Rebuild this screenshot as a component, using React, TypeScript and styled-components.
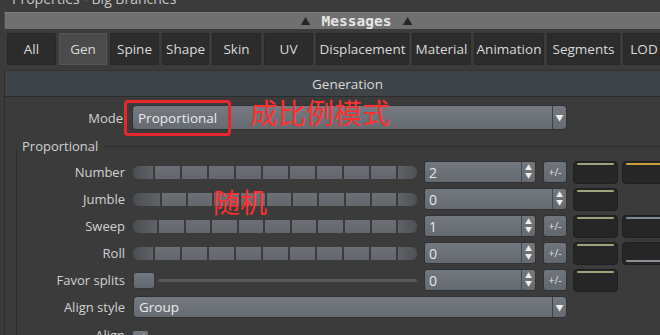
import React from "react";
import styled, { createGlobalStyle, css } from "styled-components";

const GlobalStyle = createGlobalStyle`
  html, body { margin: 0; padding: 0; background: #3b3b3b; }
  body { font-family: "Open Sans", "Noto Sans CJK SC", sans-serif; }
  * { box-sizing: border-box; }
`;

const Window = styled.div`
  position: relative;
  width: 660px;
  height: 335px;
  overflow: hidden;
  background: #3b3b3b;
`;

const TitleBar = styled.div`
  height: 10px;
  overflow: hidden;
  padding-left: 12px;
`;

const TitleText = styled.div`
  margin-top: -9px;
  font-size: 14px;
  line-height: 16px;
  color: #c6c6c6;
  white-space: nowrap;
`;

const MessagesBar = styled.div`
  margin: 2px 0 0 4px;
  height: 17px;
  background: #707070;
  border-left: 1px solid #4c4c4c;
  border-top: 1px solid #7c7c7c;
  display: flex;
  align-items: center;
  justify-content: center;
  gap: 11px;
  padding-left: 48px;
`;

const MsgArrow = styled.span`
  font-size: 10px;
  color: #262626;
  line-height: 1;
`;

const MsgText = styled.span`
  font-family: "DejaVu Sans Mono", monospace;
  font-weight: bold;
  font-size: 14.5px;
  color: #e6e6e6;
  line-height: 16px;
`;

const TabRow = styled.div`
  margin-top: 4px;
  height: 32px;
  display: flex;
  gap: 3px;
  padding-left: 7px;
`;

const Tab = styled.div<{ $w: number; $active?: boolean }>`
  width: ${(p) => p.$w}px;
  flex-shrink: 0;
  height: 32px;
  display: flex;
  align-items: center;
  justify-content: center;
  font-size: 13.5px;
  color: #dadada;
  border-radius: 1px;
  background: ${(p) => (p.$active ? "#4b4b4b" : "#2c2c2c")};
  border: 1px solid ${(p) => (p.$active ? "#555" : "#272727")};
  white-space: nowrap;
`;

const Body = styled.div`
  margin: 5px 0 0 4px;
  border-left: 1px solid #2b2b2b;
  height: 400px;
`;

const SectionHeader = styled.div`
  height: 27px;
  background: #3e4348;
  border-top: 1px solid #303336;
  border-bottom: 1px solid #2a2d30;
  display: flex;
  align-items: center;
  justify-content: center;
  padding-left: 30px;
  font-size: 13.5px;
  color: #d8d8d8;
`;

const ModeRow = styled.div`
  margin-top: 8px;
  height: 25px;
  display: flex;
  align-items: center;
`;

const Label = styled.div<{ $w: number }>`
  width: ${(p) => p.$w}px;
  flex-shrink: 0;
  text-align: right;
  font-size: 13px;
  color: #d2d2d2;
  white-space: nowrap;
`;

const Select = styled.div<{ $h: number }>`
  margin-left: ${(p) => (p.$h === 25 ? 9 : 8)}px;
  width: ${(p) => (p.$h === 25 ? 435 : 434)}px;
  height: ${(p) => p.$h}px;
  border-radius: 4px;
  border: 1px solid #2f3235;
  background: linear-gradient(#757a81, #666b71);
  display: flex;
  align-items: stretch;
  flex-shrink: 0;
`;

const SelectText = styled.div`
  flex: 1;
  display: flex;
  align-items: center;
  padding-left: 5px;
  font-size: 13.5px;
  color: #ececec;
`;

const SelectArrow = styled.div`
  width: 14px;
  border-left: 1px solid #3f4246;
  display: flex;
  align-items: center;
  justify-content: center;
  font-size: 8px;
  color: #f0f0f0;
`;

const Group = styled.fieldset`
  margin: 7px 0 0 11px;
  padding: 6px 0 0 0;
  border: 1px solid #2f2f2f;
  border-right: none;
  border-bottom: none;
  border-radius: 5px 0 0 0;
  min-width: 0;
  display: flex;
  flex-direction: column;
  gap: 5px;
`;

const Legend = styled.legend`
  padding: 0 5px;
  font-size: 13px;
  line-height: 18px;
  color: #d2d2d2;
`;

const Row = styled.div`
  height: 22px;
  display: flex;
  align-items: center;
  flex-shrink: 0;
`;

const Slider = styled.div`
  margin-left: 8px;
  width: 284px;
  height: 13px;
  display: flex;
  gap: 2px;
  flex-shrink: 0;
`;

const Segment = styled.div<{ $end?: "left" | "right"; $w?: number }>`
  height: 13px;
  ${(p) => (p.$w ? css`width: ${p.$w}px; flex-shrink: 0;` : css`flex: 1;`)}
  background: linear-gradient(#6c7076, #63676c);
  ${(p) =>
    p.$end === "left" &&
    css`
      border-radius: 6px 0 0 6px;
      background: linear-gradient(90deg, #4b4e51, #5f6368);
    `}
  ${(p) =>
    p.$end === "right" &&
    css`
      border-radius: 0 6px 6px 0;
      background: linear-gradient(90deg, #5f6368, #4d5053);
    `}
`;

const Knob = styled.div`
  margin-left: 8px;
  width: 22px;
  height: 17px;
  border-radius: 3px;
  background: linear-gradient(#727780, #646970);
  border: 1px solid #34373a;
  flex-shrink: 0;
`;

const Track = styled.div`
  margin-left: 3px;
  width: 259px;
  height: 3px;
  border-radius: 2px;
  background: #54585c;
  flex-shrink: 0;
`;

const Spin = styled.div<{ $w: number }>`
  margin-left: 7px;
  width: ${(p) => p.$w}px;
  height: 22px;
  border-radius: 3px;
  border: 1px solid #303336;
  background: linear-gradient(#73787e, #656a70);
  display: flex;
  flex-shrink: 0;
`;

const SpinValue = styled.div`
  flex: 1;
  display: flex;
  align-items: center;
  padding-left: 4px;
  font-size: 14px;
  color: #e6e6e6;
`;

const SpinArrows = styled.div`
  width: 14px;
  border-left: 1px solid #45494d;
  display: flex;
  flex-direction: column;
  align-items: center;
  justify-content: center;
  font-size: 7px;
  line-height: 8px;
  color: #eeeeee;
`;

const PlusMinus = styled.div`
  margin-left: 7px;
  width: 24px;
  height: 22px;
  border-radius: 3px;
  background: linear-gradient(#70757b, #63686e);
  border: 1px solid #303336;
  display: flex;
  align-items: center;
  justify-content: center;
  font-size: 10.5px;
  color: #e2e2e2;
  flex-shrink: 0;
`;

const Swatch = styled.div<{ $ml: number; $w: number; $line?: string; $bottom?: boolean; $empty?: boolean }>`
  position: relative;
  margin-left: ${(p) => p.$ml}px;
  width: ${(p) => p.$w}px;
  height: 23px;
  border-radius: 4px;
  flex-shrink: 0;
  background: ${(p) => (p.$empty ? "transparent" : "#262626")};
  border: 1px solid ${(p) => (p.$empty ? "transparent" : "#1f1f1f")};
  ${(p) =>
    p.$line &&
    css`
      &::before {
        content: "";
        position: absolute;
        left: 3px;
        right: 3px;
        ${p.$bottom ? "bottom: 2px;" : "top: 1px;"}
        height: 2px;
        border-radius: 1px;
        background: ${p.$line};
      }
    `}
`;

const Check = styled.div`
  margin-left: 8px;
  margin-top: 8px;
  width: 15px;
  height: 15px;
  border-radius: 2px;
  background: linear-gradient(#777c82, #686d73);
  display: flex;
  align-items: center;
  justify-content: center;
  flex-shrink: 0;
`;

const AlignRow = styled.div`
  height: 22px;
  display: flex;
  align-items: flex-start;
  flex-shrink: 0;
`;

const AlignLabel = styled(Label)`
  margin-top: 3px;
`;

const Highlight = styled.div`
  position: absolute;
  left: 124px;
  top: 100px;
  width: 107px;
  height: 36px;
  border: 3px solid #e8262b;
  border-radius: 4px;
`;

const Note = styled.div<{ $x: number; $y: number; $size: number }>`
  position: absolute;
  left: ${(p) => p.$x}px;
  top: ${(p) => p.$y}px;
  font-family: "Noto Sans CJK SC", sans-serif;
  font-weight: 400;
  font-size: ${(p) => p.$size}px;
  line-height: 1;
  color: #ff2f2f;
  white-space: nowrap;
`;

const tabs: [string, number][] = [
  ["All", 49],
  ["Gen", 48],
  ["Spine", 49],
  ["Shape", 47],
  ["Skin", 49],
  ["UV", 49],
  ["Displacement", 93],
  ["Material", 59],
  ["Animation", 70],
  ["Segments", 73],
  ["LOD", 42],
];

type Side = { line?: string; bottom?: boolean; empty?: boolean };

const SegSlider = ({ lead }: { lead: number }) => (
  <Slider>
    <Segment $end="left" $w={lead} />
    {Array.from({ length: 9 }).map((_, i) => (
      <Segment key={i} />
    ))}
    <Segment $end="right" $w={19} />
  </Slider>
);

const SpinBox = ({ value, w }: { value: string; w: number }) => (
  <Spin $w={w}>
    <SpinValue>{value}</SpinValue>
    <SpinArrows>
      <span>▲</span>
      <span>▼</span>
    </SpinArrows>
  </Spin>
);

const GREEN = "#9da57d";

const ParamRow = ({
  label,
  lead,
  value,
  pm = true,
  knob,
  side,
}: {
  label: string;
  lead?: number;
  value: string;
  pm?: boolean;
  knob?: boolean;
  side?: Side;
}) => (
  <Row>
    <Label $w={108}>{label}</Label>
    {knob ? (
      <>
        <Knob />
        <Track />
      </>
    ) : (
      <SegSlider lead={lead ?? 20} />
    )}
    <SpinBox value={value} w={pm ? 112 : 143} />
    {pm && <PlusMinus>+/-</PlusMinus>}
    <Swatch $ml={6} $w={45} $line={GREEN} />
    {side && <Swatch $ml={4} $w={50} $line={side.line} $bottom={side.bottom} $empty={side.empty} />}
  </Row>
);

export default function App() {
  return (
    <>
      <GlobalStyle />
      <Window>
        <TitleBar>
          <TitleText>Properties - Big Branches</TitleText>
        </TitleBar>
        <MessagesBar>
          <MsgArrow>▲</MsgArrow>
          <MsgText>Messages</MsgText>
          <MsgArrow>▲</MsgArrow>
        </MessagesBar>
        <TabRow>
          {tabs.map(([t, w]) => (
            <Tab key={t} $w={w} $active={t === "Gen"}>
              {t}
            </Tab>
          ))}
        </TabRow>
        <Body>
          <SectionHeader>Generation</SectionHeader>
          <ModeRow>
            <Label $w={118}>Mode</Label>
            <Select $h={25}>
              <SelectText>Proportional</SelectText>
              <SelectArrow>▼</SelectArrow>
            </Select>
          </ModeRow>
          <Group>
            <Legend>Proportional</Legend>
            <ParamRow label="Number" lead={20} value="2" side={{ line: "#c9a13a" }} />
            <ParamRow label="Jumble" lead={27} value="0" pm={false} />
            <ParamRow label="Sweep" lead={24} value="1" side={{ line: "#7d8a9c" }} />
            <ParamRow label="Roll" lead={20} value="0" side={{ line: "#8a8f95", bottom: true }} />
            <ParamRow label="Favor splits" knob value="0" />
            <Row>
              <Label $w={108}>Align style</Label>
              <Select $h={22}>
                <SelectText>Group</SelectText>
                <SelectArrow>▼</SelectArrow>
              </Select>
            </Row>
            <AlignRow>
              <AlignLabel $w={108}>Align</AlignLabel>
              <Check>
                <svg width="11" height="11" viewBox="0 0 11 11">
                  <path d="M1.5 6 L4.2 8.8 L9.5 1.8" fill="none" stroke="#f2f2f2" strokeWidth="1.8" />
                </svg>
              </Check>
            </AlignRow>
          </Group>
        </Body>
        <Highlight />
        <Note $x={250} $y={98} $size={28}>成比例模式</Note>
        <Note $x={213} $y={188} $size={27}>随机</Note>
      </Window>
    </>
  );
}
